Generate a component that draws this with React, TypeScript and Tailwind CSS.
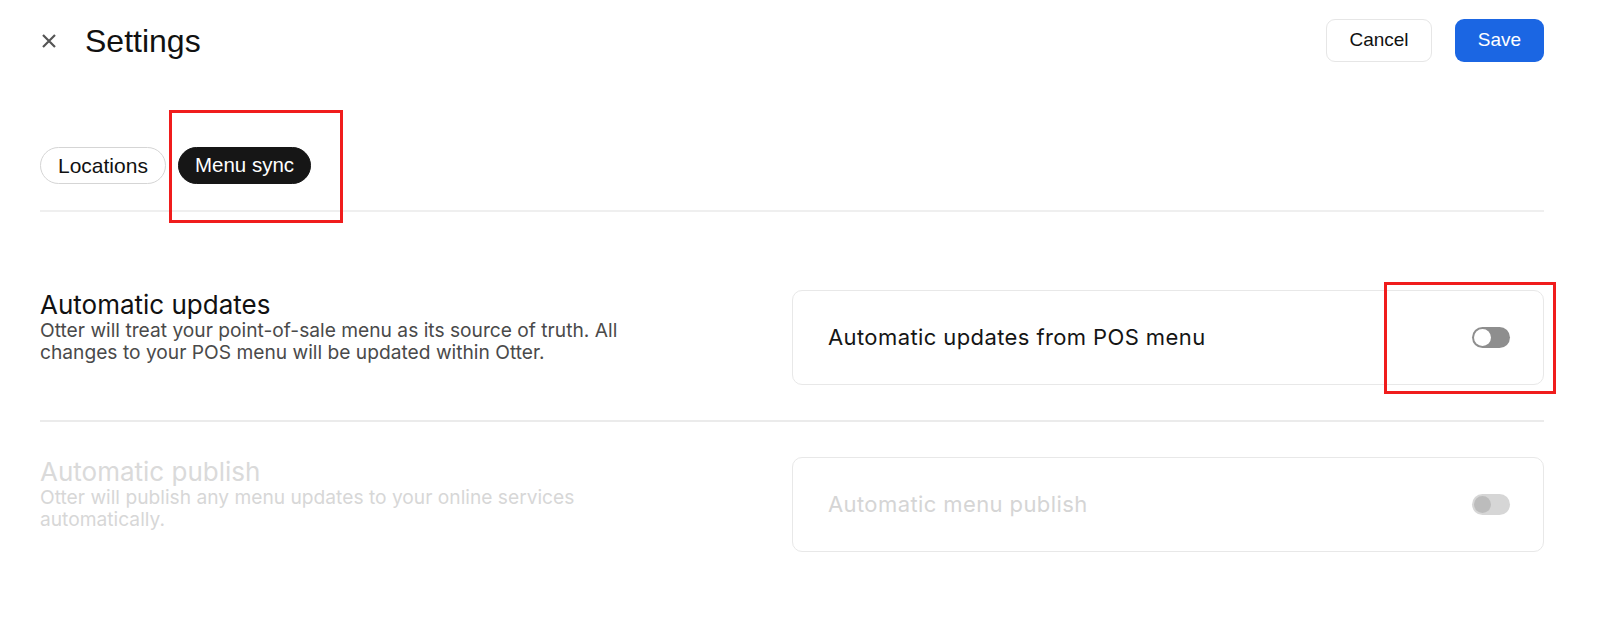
import React, { useState } from 'react';

const sans = "font-['Liberation_Sans',Arial,sans-serif]";

function Toggle({ on, disabled }: { on: boolean; disabled?: boolean }) {
  const track = disabled ? 'bg-[#d6d6d6]' : on ? 'bg-[#1b66e3]' : 'bg-[#8e8e8e]';
  const knob = disabled ? 'bg-[#bcbcbc]' : 'bg-white';
  return (
    <button
      disabled={disabled}
      className={`flex h-[21px] w-[38px] items-center rounded-full p-[2px] ${track} ${on ? 'justify-end' : 'justify-start'}`}
    >
      <span className={`block h-[17px] w-[17px] rounded-full ${knob}`} />
    </button>
  );
}

function SettingRow({
  title,
  description,
  label,
  disabled,
  last,
}: {
  title: string;
  description: string;
  label: string;
  disabled?: boolean;
  last?: boolean;
}) {
  const [on] = useState(false);
  return (
    <div className={`grid grid-cols-2 py-[35px] ${last ? '' : 'border-b-2 border-[#ebebeb]'}`}>
      <div className="font-['Inter',sans-serif]">
        <h2 className={`text-[26px] leading-[29px] ${disabled ? 'text-[#dadada]' : 'text-[#111]'}`}>{title}</h2>
        <p className={`max-w-[600px] text-[19.2px] leading-[22px] ${disabled ? 'text-[#d7d7d7]' : 'text-[#4a4a4a]'}`}>
          {description}
        </p>
      </div>
      <div className="flex h-[95px] items-center justify-between rounded-[10px] border border-[#e8e8e8] pl-[35px] pr-[33px]">
        <span
          className={`font-['Inter',sans-serif] text-[22px] tracking-[0.4px] ${disabled ? 'text-[#d5d5d5]' : 'text-[#151515]'}`}
        >
          {label}
        </span>
        <Toggle on={on} disabled={disabled} />
      </div>
    </div>
  );
}

export default function App() {
  const [tab, setTab] = useState('menu');

  return (
    <div className={`relative min-h-[638px] bg-white pl-10 pr-14 ${sans}`}>
      <header className="flex h-20 items-center justify-between">
        <div className="flex items-center">
          <button className="ml-[1px] mt-[1px] text-[#555]">
            <svg width="16" height="16" viewBox="0 0 16 16" fill="none" stroke="currentColor" strokeWidth="2.2">
              <path d="M2 2l12 12M14 2L2 14" />
            </svg>
          </button>
          <h1 className="ml-7 mt-[2px] text-[32px] text-[#111]">Settings</h1>
        </div>
        <div className="flex items-center gap-[23px] pt-[1px]">
          <button className="h-[43px] w-[106px] rounded-[9px] border border-[#e6e6e6] text-[19px] text-[#111]">
            Cancel
          </button>
          <button className="h-[43px] w-[89px] rounded-[9px] bg-[#1b66e3] text-[19px] text-white">Save</button>
        </div>
      </header>

      <div className="mt-[67px] flex gap-3 border-b-2 border-[#efefef] pb-[26px]">
        <button
          onClick={() => setTab('locations')}
          className={`h-[37px] rounded-full border px-[17px] text-[21px] ${
            tab === 'locations' ? 'border-[#161616] bg-[#161616] text-white' : 'border-[#d5d5d5] text-[#111]'
          }`}
        >
          Locations
        </button>
        <button
          onClick={() => setTab('menu')}
          className={`h-[37px] rounded-full border px-[16px] text-[20.5px] ${
            tab === 'menu' ? 'border-[#161616] bg-[#161616] text-white' : 'border-[#d5d5d5] text-[#111]'
          }`}
        >
          Menu sync
        </button>
      </div>

      <div className="mt-[43px]">
        <SettingRow
          title="Automatic updates"
          description="Otter will treat your point-of-sale menu as its source of truth. All changes to your POS menu will be updated within Otter."
          label="Automatic updates from POS menu"
        />
        <SettingRow
          title="Automatic publish"
          description="Otter will publish any menu updates to your online services automatically."
          label="Automatic menu publish"
          disabled
          last
        />
      </div>

      {/* annotation boxes */}
      <div className="pointer-events-none absolute left-[169px] top-[110px] h-[113px] w-[174px] border-[3px] border-[#f01c1c]" />
      <div className="pointer-events-none absolute left-[1384px] top-[282px] h-[112px] w-[172px] border-[3px] border-[#f01c1c]" />
    </div>
  );
}
